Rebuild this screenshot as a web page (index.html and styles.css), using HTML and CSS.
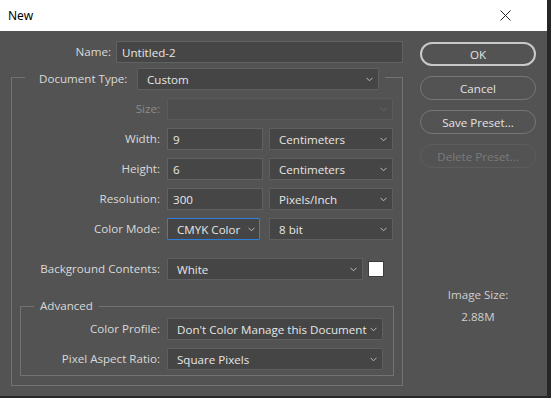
FILE: index.html
```html
<!doctype html>
<html>
<head>
<meta charset="utf-8">
<title>New</title>
<link rel="stylesheet" href="styles.css">
</head>
<body>
<div class="window">
	<div class="titlebar">
		<span class="title">New</span>
		<svg class="close" width="11" height="11" viewBox="0 0 11 11"><path d="M0.5 0.5L10.5 10.5M10.5 0.5L0.5 10.5" stroke="#222" stroke-width="1"/></svg>
	</div>
	<div class="dialog">
		<div class="form">
			<div class="row name-row">
				<label class="lbl">Name:</label>
				<input class="field name" value="Untitled-2">
			</div>
			<fieldset class="group">
				<legend class="group-head">
					<span>Document Type:</span>
					<div class="select doc-type"><span>Custom</span><svg class="chev" width="7" height="5" viewBox="0 0 7 5"><polyline points="0.5,0.8 3.5,3.8 6.5,0.8" /></svg></div>
				</legend>
				<div class="row first">
					<label class="lbl off">Size:</label>
					<div class="select size disabled"><span></span><svg class="chev" width="7" height="5" viewBox="0 0 7 5"><polyline points="0.5,0.8 3.5,3.8 6.5,0.8" /></svg></div>
				</div>
				<div class="row">
					<label class="lbl">Width:</label>
					<input class="field num" value="9">
					<div class="select unit"><span>Centimeters</span><svg class="chev" width="7" height="5" viewBox="0 0 7 5"><polyline points="0.5,0.8 3.5,3.8 6.5,0.8" /></svg></div>
				</div>
				<div class="row">
					<label class="lbl">Height:</label>
					<input class="field num" value="6">
					<div class="select unit"><span>Centimeters</span><svg class="chev" width="7" height="5" viewBox="0 0 7 5"><polyline points="0.5,0.8 3.5,3.8 6.5,0.8" /></svg></div>
				</div>
				<div class="row">
					<label class="lbl">Resolution:</label>
					<input class="field num" value="300">
					<div class="select unit"><span>Pixels/Inch</span><svg class="chev" width="7" height="5" viewBox="0 0 7 5"><polyline points="0.5,0.8 3.5,3.8 6.5,0.8" /></svg></div>
				</div>
				<div class="row">
					<label class="lbl">Color Mode:</label>
					<div class="select mode focus"><span>CMYK Color</span><svg class="chev" width="7" height="5" viewBox="0 0 7 5"><polyline points="0.5,0.8 3.5,3.8 6.5,0.8" /></svg></div>
					<div class="select unit bits"><span>8 bit</span><svg class="chev" width="7" height="5" viewBox="0 0 7 5"><polyline points="0.5,0.8 3.5,3.8 6.5,0.8" /></svg></div>
				</div>
				<div class="row bg-row">
					<label class="lbl">Background Contents:</label>
					<div class="select bg"><span>White</span><svg class="chev" width="7" height="5" viewBox="0 0 7 5"><polyline points="0.5,0.8 3.5,3.8 6.5,0.8" /></svg></div>
					<div class="swatch"></div>
				</div>
				<fieldset class="adv">
					<legend>Advanced</legend>
					<div class="row first">
						<label class="lbl">Color Profile:</label>
						<div class="select wide"><span>Don't Color Manage this Document</span><svg class="chev" width="7" height="5" viewBox="0 0 7 5"><polyline points="0.5,0.8 3.5,3.8 6.5,0.8" /></svg></div>
					</div>
					<div class="row">
						<label class="lbl">Pixel Aspect Ratio:</label>
						<div class="select wide"><span>Square Pixels</span><svg class="chev" width="7" height="5" viewBox="0 0 7 5"><polyline points="0.5,0.8 3.5,3.8 6.5,0.8" /></svg></div>
					</div>
				</fieldset>
			</fieldset>
		</div>
		<div class="side">
			<button class="btn ok">OK</button>
			<button class="btn">Cancel</button>
			<button class="btn">Save Preset...</button>
			<button class="btn dim">Delete Preset...</button>
			<div class="info">
				<div>Image Size:</div>
				<div>2.88M</div>
			</div>
		</div>
	</div>
</div>
</body>
</html>
```

FILE: styles.css
```css
html,body{
	margin:0;
	padding:0;
	background:#262626;
}
*{
	box-sizing:border-box;
}
.window{
	width:551px;
	height:398px;
	background:#535353;
	border-right:4px solid #262626;
	border-bottom:2px solid #262626;
	font:11.6px/22px "Open Sans","Noto Sans",sans-serif;
	color:#d9d9d9;
	overflow:hidden;
}
.titlebar{
	height:31px;
	background:#fff;
	display:flex;
	align-items:center;
	justify-content:space-between;
	padding:0 36px 0 8px;
}
.title{
	font:12px "Noto Sans","Liberation Sans",sans-serif;
	color:#000;
}
.dialog{
	display:flex;
	padding:10px 0 0 11px;
}
.form{
	width:392px;
}
.row{
	display:flex;
	align-items:center;
	height:22px;
	margin-top:8px;
}
.lbl{
	width:148px;
	margin-right:7px;
	text-align:right;
	white-space:nowrap;
}
.lbl.off{
	color:#8c8c8c;
}
.name-row{
	margin-top:0;
}
.name-row .lbl{
	width:100px;
	margin-right:5px;
}
.field{
	height:22px;
	background:#464646;
	border:1px solid #616161;
	color:#e6e6e6;
	font:inherit;
	padding:1px 5px 0;
	outline:none;
}
.name{
	width:287px;
}
.num{
	width:96px;
}
.select{
	height:22px;
	display:flex;
	align-items:center;
	justify-content:space-between;
	padding:1px 5px 0 9px;
	background:#454545;
	border:1px solid #5f5f5f;
	color:#e6e6e6;
	border-radius:1px;
}
.select span{
	white-space:nowrap;
}
.chev{
	flex:none;
	fill:none;
	stroke:#bdbdbd;
	stroke-width:1;
}
.doc-type{
	width:242px;
}
.size{
	width:226px;
}
.disabled{
	background:#4e4e4e;
	border-color:#5a5a5a;
}
.disabled .chev{
	stroke:#666;
}
.unit{
	width:124px;
	margin-left:6px;
}
.mode{
	width:93px;
	padding-right:4px;
}
.focus{
	border-color:#2d7fdc;
}
.bits{
	margin-left:9px;
}
.bg-row{
	margin-top:18px;
}
.bg{
	width:196px;
}
.swatch{
	width:16px;
	height:16px;
	margin-left:5px;
	background:#fff;
	border:1px solid #3c3c3c;
}
.group{
	margin:1px 0 0;
	padding:0;
	width:392px;
	border:1px solid #737373;
	min-width:0;
}
.group-head{
	margin-left:13px;
	width:360px;
	padding:4px 6px 0 14px;
	display:flex;
	align-items:center;
	justify-content:space-between;
}
.adv{
	margin:18px 8px 9px 8px;
	padding:0 0 5px;
	border:1px solid #737373;
	min-width:0;
}
.adv legend{
	margin-left:13px;
	padding:0 6px;
	line-height:16px;
}
.adv .first{
	margin-top:4px;
}
.adv .lbl{
	width:139px;
}
.wide{
	width:216px;
}
.side{
	width:116px;
	margin-left:17px;
	padding-top:1px;
	display:flex;
	flex-direction:column;
	gap:10px;
}
.btn{
	height:24px;
	width:116px;
	border:1px solid #777;
	border-radius:12px;
	background:transparent;
	color:#e2e2e2;
	font:inherit;
	line-height:20px;
	padding:1px 0 0;
}
.ok{
	border:2px solid #c9c9c9;
}
.dim{
	color:#7b7b7b;
	border-color:#5d5d5d;
}
.info{
	margin-top:106px;
	text-align:center;
	color:#cfcfcf;
}
```
